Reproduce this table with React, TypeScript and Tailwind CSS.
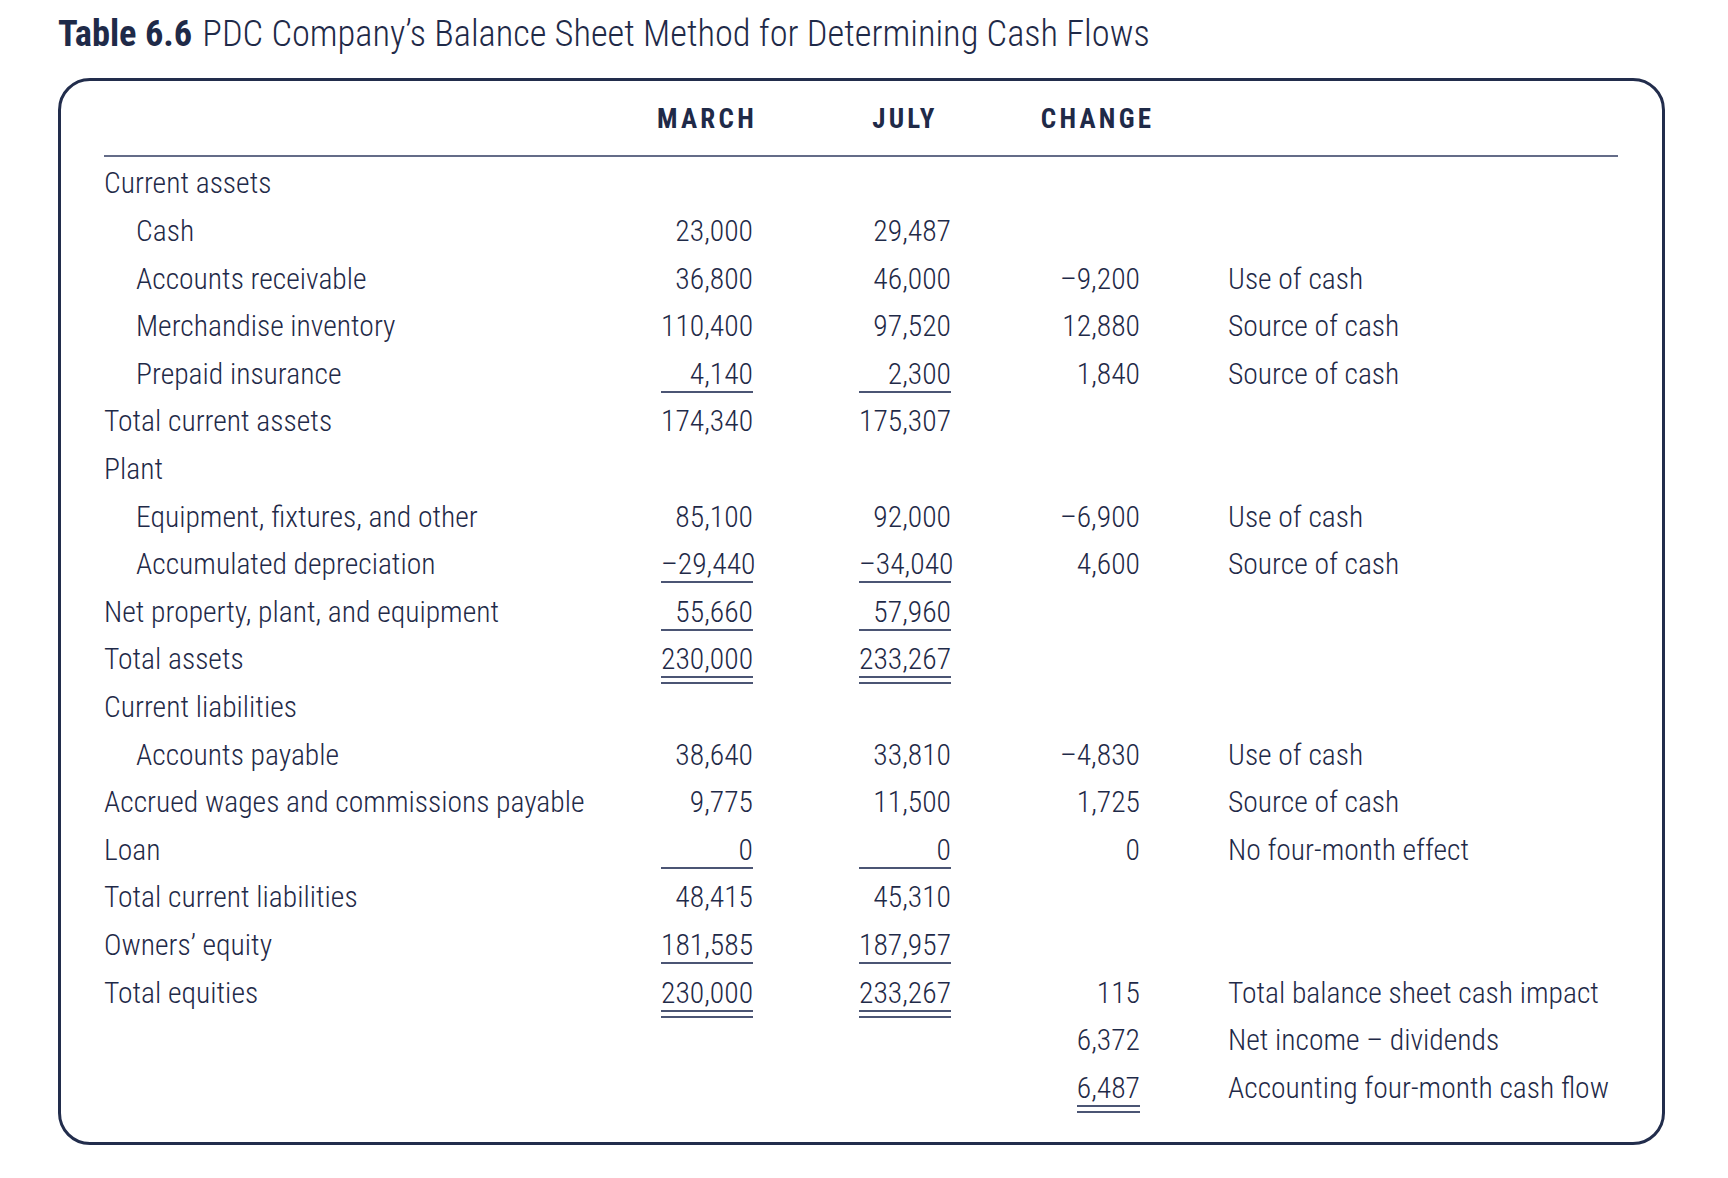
import React from "react";

type Row = {
  label: string;
  indent?: boolean;
  march?: string;
  july?: string;
  change?: string;
  note?: string;
  // 1 = single rule, 2 = double rule under the money columns
  u?: 0 | 1 | 2;
  changeU?: 0 | 1 | 2;
  first?: boolean;
};

const rows: Row[] = [
  { label: "Current assets", first: true },
  { label: "Cash", indent: true, march: "23,000", july: "29,487" },
  { label: "Accounts receivable", indent: true, march: "36,800", july: "46,000", change: "–9,200", note: "Use of cash" },
  { label: "Merchandise inventory", indent: true, march: "110,400", july: "97,520", change: "12,880", note: "Source of cash" },
  { label: "Prepaid insurance", indent: true, march: "4,140", july: "2,300", change: "1,840", note: "Source of cash", u: 1 },
  { label: "Total current assets", march: "174,340", july: "175,307" },
  { label: "Plant" },
  { label: "Equipment, fixtures, and other", indent: true, march: "85,100", july: "92,000", change: "–6,900", note: "Use of cash" },
  { label: "Accumulated depreciation", indent: true, march: "–29,440", july: "–34,040", change: "4,600", note: "Source of cash", u: 1 },
  { label: "Net property, plant, and equipment", march: "55,660", july: "57,960", u: 1 },
  { label: "Total assets", march: "230,000", july: "233,267", u: 2 },
  { label: "Current liabilities" },
  { label: "Accounts payable", indent: true, march: "38,640", july: "33,810", change: "–4,830", note: "Use of cash" },
  { label: "Accrued wages and commissions payable", march: "9,775", july: "11,500", change: "1,725", note: "Source of cash" },
  { label: "Loan", march: "0", july: "0", change: "0", note: "No four-month effect", u: 1 },
  { label: "Total current liabilities", march: "48,415", july: "45,310" },
  { label: "Owners’ equity", march: "181,585", july: "187,957", u: 1 },
  { label: "Total equities", march: "230,000", july: "233,267", change: "115", note: "Total balance sheet cash impact", u: 2 },
  { label: "", change: "6,372", note: "Net income – dividends" },
  { label: "", change: "6,487", note: "Accounting four-month cash flow", changeU: 2 },
];

const Money = ({ value, u = 0, full }: { value?: string; u?: 0 | 1 | 2; full?: boolean }) => {
  if (!value) return null;
  const inner = (
    <div className={`h-[42px] leading-[47.6px] text-right ${u > 0 ? "border-b-2 border-[#4b5574]" : ""}`}>
      {value}
    </div>
  );
  const body = u === 2 ? <div className="border-b-2 border-[#4b5574] pb-[4px]">{inner}</div> : inner;
  return full ? body : <div className="flex justify-end"><div>{body}</div></div>;
};

export default function App() {
  return (
    <div className="min-h-screen bg-white pl-[58px] pt-[16px] text-[#1f2a48] font-['Roboto_Condensed','Liberation_Sans_Narrow','Arial_Narrow','DejaVu_Sans_Condensed','Noto_Sans',sans-serif] font-stretch-condensed font-light">
      <h1 className="text-[36.4px] leading-[36px] whitespace-nowrap">
        <span className="font-bold">Table 6.6</span>
        <span className="ml-[10px]">PDC Company’s Balance Sheet Method for Determining Cash Flows</span>
      </h1>

      <div className="mt-[26px] w-[1607px] rounded-[32px] border-[3px] border-[#222d4c] pl-[43px] pr-[44px] pt-[25px] pb-[30px]">
        {/* column heads */}
        <div className="flex h-[27px] text-[27px] leading-none font-bold tracking-[0.12em]">
          <div className="w-[557px] shrink-0" />
          <div className="flex w-[92px] shrink-0 justify-center whitespace-nowrap">MARCH</div>
          <div className="ml-[106px] flex w-[92px] shrink-0 justify-center whitespace-nowrap">JULY</div>
          <div className="ml-[104px] flex w-[85px] shrink-0 justify-center whitespace-nowrap">CHANGE</div>
        </div>
        <div className="mt-[22px] h-[2px] bg-[#646c88]" />

        <div className="text-[29.6px]">
          {rows.map((r, i) => (
            <div
              key={i}
              className={`flex items-start whitespace-nowrap ${r.first ? "h-[51px] pt-[3.4px]" : "h-[47.6px]"}`}
            >
              <div className={`w-[557px] shrink-0 leading-[47.6px] ${r.indent ? "pl-[32px]" : ""}`}>{r.label}</div>
              <div className="w-[92px] shrink-0">
                <Money value={r.march} u={r.u} full />
              </div>
              <div className="ml-[106px] w-[92px] shrink-0">
                <Money value={r.july} u={r.u} full />
              </div>
              <div className="ml-[104px] w-[85px] shrink-0">
                <Money value={r.change} u={r.changeU} />
              </div>
              <div className="shrink-0 pl-[88px] leading-[47.6px]">{r.note}</div>
            </div>
          ))}
        </div>
      </div>
    </div>
  );
}
